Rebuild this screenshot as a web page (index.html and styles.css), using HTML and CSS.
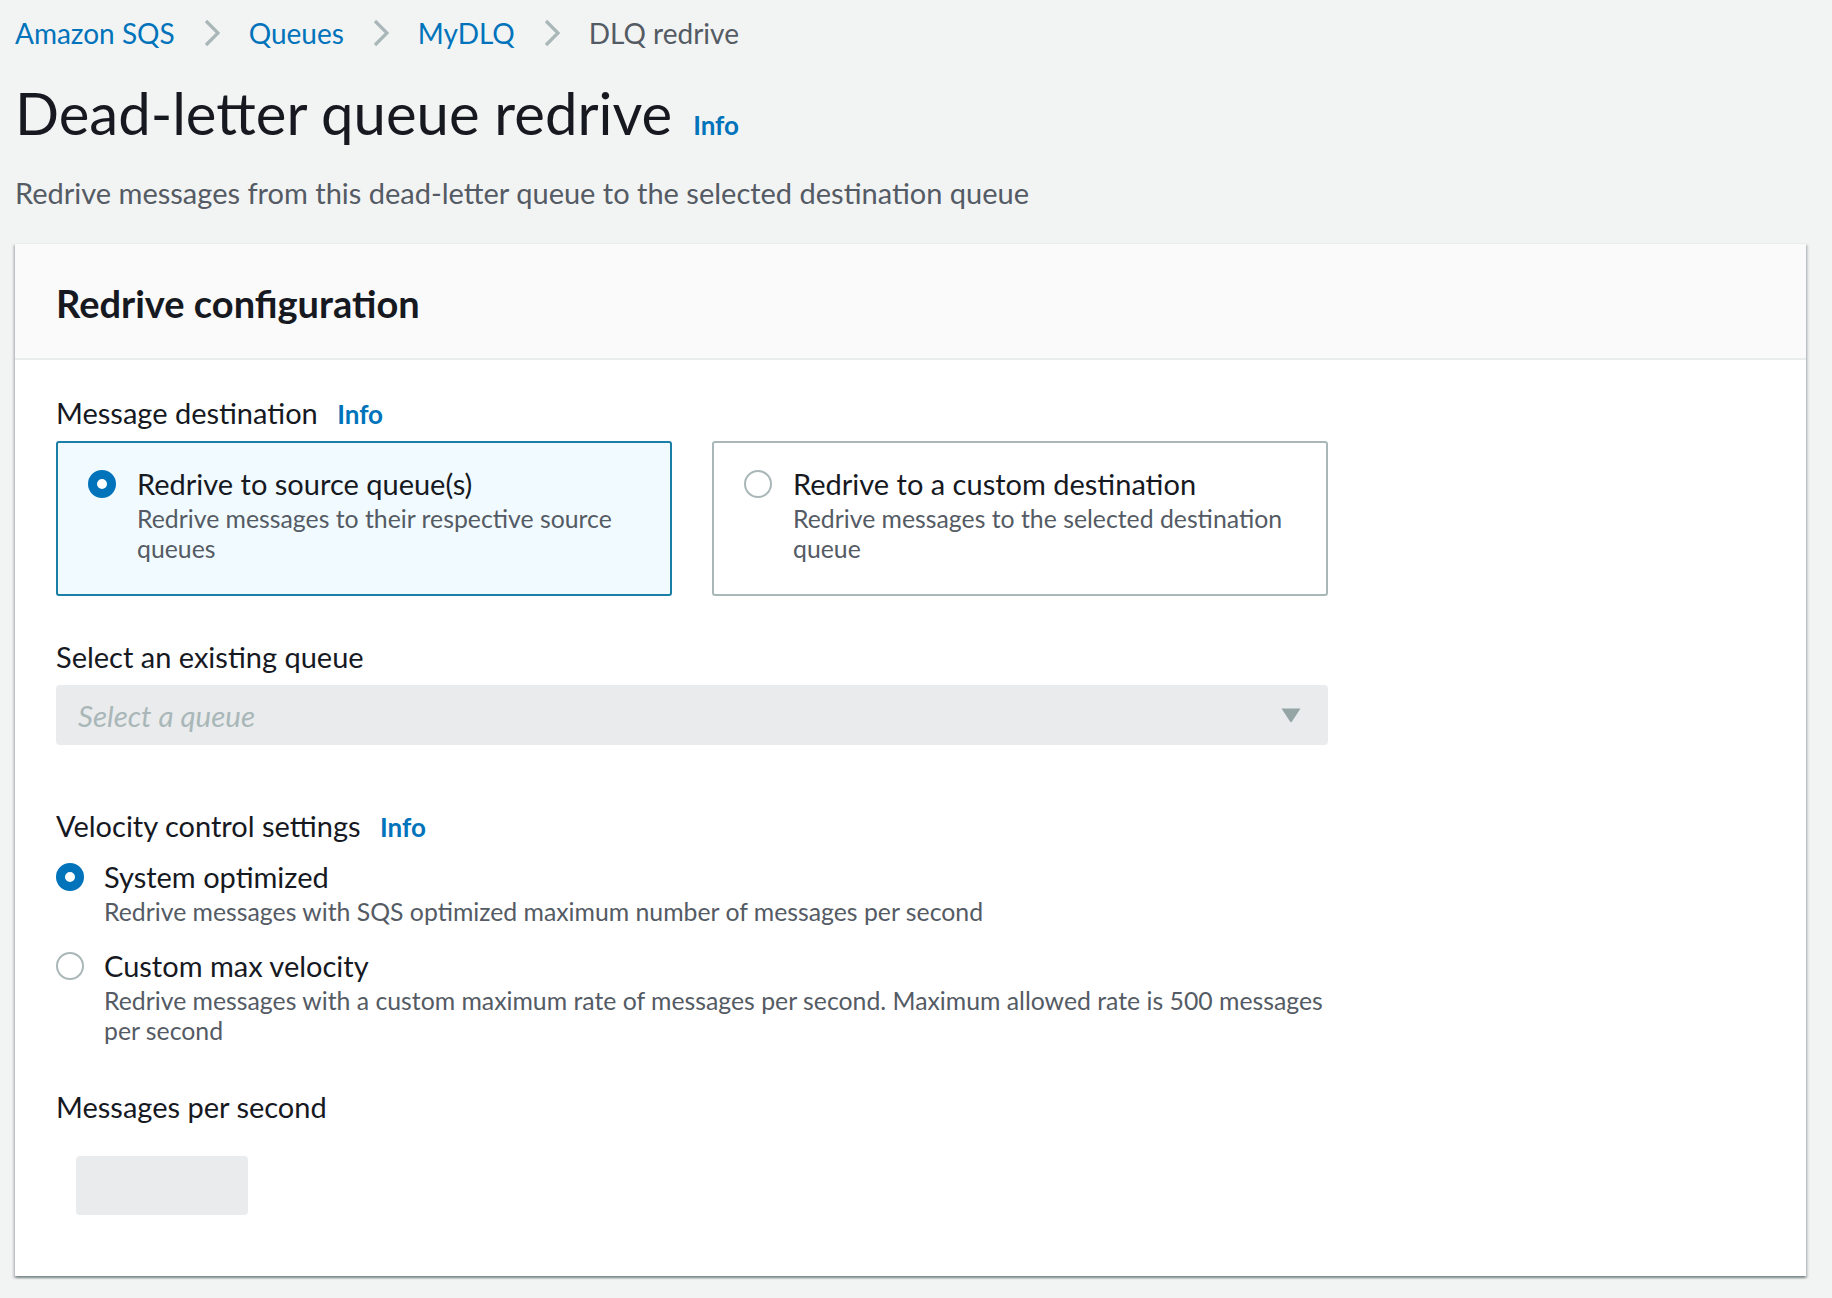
FILE: index.html
```html
<!DOCTYPE html>
<html lang="en">
<head>
<meta charset="utf-8">
<title>Dead-letter queue redrive</title>
<link rel="stylesheet" href="styles.css">
</head>
<body>
<div class="page">
  <nav class="crumbs">
    <a class="crumb-link" href="#">Amazon SQS</a>
    <svg class="chev" viewBox="0 0 16 28"><polyline points="2,2 14,14 2,26"/></svg>
    <a class="crumb-link" href="#">Queues</a>
    <svg class="chev" viewBox="0 0 16 28"><polyline points="2,2 14,14 2,26"/></svg>
    <a class="crumb-link" href="#">MyDLQ</a>
    <svg class="chev" viewBox="0 0 16 28"><polyline points="2,2 14,14 2,26"/></svg>
    <span class="crumb-current">DLQ redrive</span>
  </nav>

  <div class="title-row">
    <h1>Dead-letter queue redrive</h1>
    <a class="info" href="#">Info</a>
  </div>
  <p class="desc">Redrive messages from this dead-letter queue to the selected destination queue</p>

  <section class="card">
    <header class="card-head">
      <h2>Redrive configuration</h2>
    </header>
    <div class="card-body">
      <div class="form">
        <div class="field-label">Message destination <a class="info" href="#">Info</a></div>
        <div class="tiles">
          <div class="tile selected">
            <span class="radio checked"></span>
            <div class="opt-text">
              <div class="opt-title">Redrive to source queue(s)</div>
              <div class="opt-desc">Redrive messages to their respective source queues</div>
            </div>
          </div>
          <div class="tile">
            <span class="radio"></span>
            <div class="opt-text">
              <div class="opt-title">Redrive to a custom destination</div>
              <div class="opt-desc">Redrive messages to the selected destination queue</div>
            </div>
          </div>
        </div>

        <div class="field-label select-label">Select an existing queue</div>
        <div class="select">
          <span class="placeholder">Select a queue</span>
          <svg class="caret" viewBox="0 0 22 16"><path d="M1.5 1.5 H20.5 L12 14.5 Q11 16 10 14.5 Z"/></svg>
        </div>

        <div class="field-label velocity-label">Velocity control settings <a class="info" href="#">Info</a></div>
        <div class="radio-row first">
          <span class="radio checked"></span>
          <div class="opt-text">
            <div class="opt-title">System optimized</div>
            <div class="opt-desc">Redrive messages with SQS optimized maximum number of messages per second</div>
          </div>
        </div>
        <div class="radio-row second">
          <span class="radio"></span>
          <div class="opt-text">
            <div class="opt-title">Custom max velocity</div>
            <div class="opt-desc">Redrive messages with a custom maximum rate of messages per second. Maximum allowed rate is 500 messages per second</div>
          </div>
        </div>

        <div class="field-label mps-label">Messages per second</div>
        <div class="num-input"></div>
      </div>
    </div>
  </section>
</div>
</body>
</html>
```

FILE: styles.css
```css
* {
  box-sizing: border-box;
}

html,
body {
  margin: 0;
  padding: 0;
}

body {
  background: #f2f3f3;
  font-family: Lato, "Liberation Sans", sans-serif;
  color: #16191f;
  width: 1832px;
  height: 1298px;
  overflow: hidden;
}

.page {
  padding: 13px 26px 0 15px;
}

.crumbs {
  display: flex;
  align-items: center;
  height: 40px;
  font-size: 28px;
  line-height: 40px;
}

.crumb-link {
  color: #0073bb;
  text-decoration: none;
}

.crumb-current {
  color: #545b64;
}

.chev {
  width: 16px;
  height: 28px;
  margin: 0 29px;
  fill: none;
  stroke: #aab7b8;
  stroke-width: 3.2;
}

.title-row {
  display: flex;
  align-items: baseline;
  gap: 21px;
  margin-top: 28px;
}

h1 {
  margin: 0;
  font-size: 58px;
  line-height: 64px;
  font-weight: 400;
}

.info {
  color: #0073bb;
  font-weight: 700;
  font-size: 26px;
  text-decoration: none;
}

.desc {
  margin: 28px 0 0;
  font-size: 29px;
  line-height: 40px;
  color: #545b64;
}

.card {
  margin-top: 30px;
  width: 1791px;
  background: #ffffff;
  border-top: 1px solid #eaeded;
  box-shadow: 0 2px 2px rgba(0, 28, 36, 0.3), 2px 2px 2px rgba(0, 28, 36, 0.15), -2px 2px 2px rgba(0, 28, 36, 0.15);
}

.card-head {
  background: #fafafa;
  border-bottom: 2px solid #eaeded;
  padding: 35px 41px 31px;
}

h2 {
  margin: 0;
  font-size: 38px;
  line-height: 48px;
  font-weight: 700;
}

.card-body {
  padding: 33px 41px 61px;
}

.form {
  width: 1272px;
}

.field-label {
  font-size: 29px;
  line-height: 40px;
}

.field-label .info {
  margin-left: 12px;
}

.tiles {
  display: grid;
  grid-template-columns: 1fr 1fr;
  gap: 40px;
  margin-top: 7px;
}

.tile {
  display: flex;
  gap: 21px;
  border: 2px solid #aab7b8;
  border-radius: 3px;
  padding: 21px 30px 30px 30px;
  background: #ffffff;
}

.tile.selected {
  border-color: #1a7ea6;
  background: #f1faff;
}

.radio {
  flex: none;
  width: 28px;
  height: 28px;
  margin-top: 6px;
  border-radius: 50%;
  border: 2px solid #aab7b8;
  background: #ffffff;
}

.radio.checked {
  border: 9px solid #0073bb;
}

.opt-title {
  font-size: 29px;
  line-height: 40px;
}

.opt-desc {
  font-size: 24.8px;
  line-height: 30px;
  color: #545b64;
}

.select-label {
  margin-top: 41px;
}

.select {
  margin-top: 8px;
  height: 60px;
  border-radius: 4px;
  background: #e9ebed;
  display: flex;
  align-items: center;
  justify-content: space-between;
  padding: 0 26px 0 22px;
}

.placeholder {
  font-size: 29.5px;
  font-style: italic;
  color: #aab7b8;
}

.caret {
  width: 22px;
  height: 16px;
  fill: #95a5a6;
}

.velocity-label {
  margin-top: 61px;
}

.radio-row {
  display: flex;
  gap: 20px;
}

.radio-row.first {
  margin-top: 10px;
}

.radio-row.second {
  margin-top: 19px;
}

.mps-label {
  margin-top: 41px;
}

.num-input {
  margin: 29px 0 0 20px;
  width: 172px;
  height: 59px;
  border-radius: 4px;
  background: #e9ebed;
}
```
